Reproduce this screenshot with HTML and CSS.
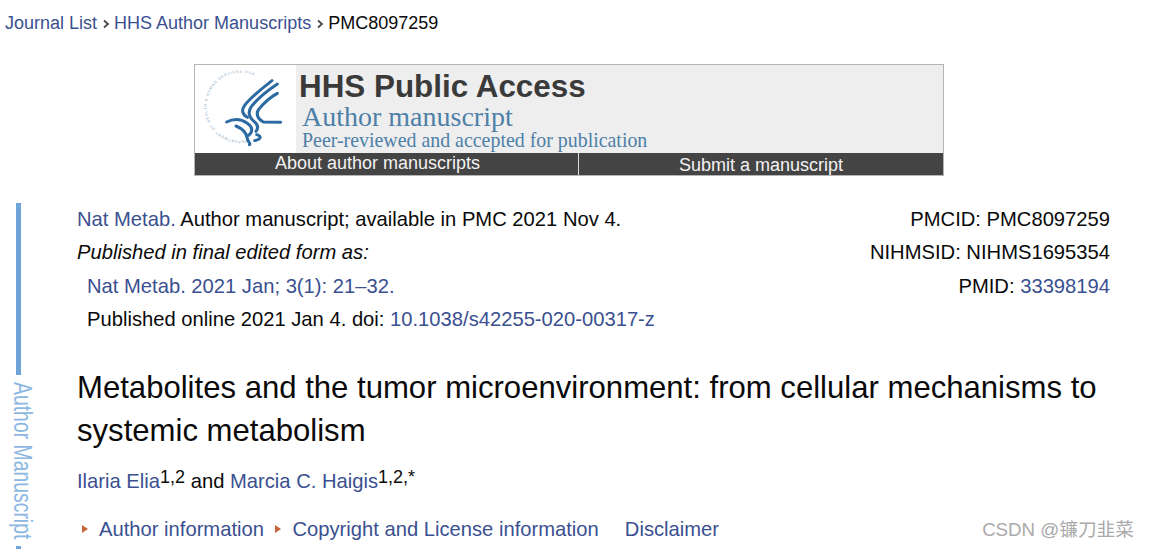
FILE: index.html
```html
<!DOCTYPE html>
<html lang="en">
<head>
<meta charset="utf-8">
<title>Metabolites and the tumor microenvironment</title>
<link rel="stylesheet" href="styles.css">
</head>
<body>
<nav class="crumbs">
  <a href="#">Journal List</a>
  <svg class="chev" viewBox="0 0 8 10"><path d="M2 1.5 L6 5 L2 8.5" fill="none" stroke="#444" stroke-width="1.7"/></svg>
  <a href="#">HHS Author Manuscripts</a>
  <svg class="chev" viewBox="0 0 8 10"><path d="M2 1.5 L6 5 L2 8.5" fill="none" stroke="#444" stroke-width="1.7"/></svg>
  <span>PMC8097259</span>
</nav>

<section class="banner">
  <div class="banner-top">
    <div class="seal">
      <svg viewBox="15 15 303 264" width="101" height="88">
        <defs><path id="ring" d="M172 240 A102 102 0 1 1 226 70"/></defs>
        <text class="seal-text"><textPath href="#ring">DEPARTMENT OF HEALTH &amp; HUMAN SERVICES USA</textPath></text>
        <g fill="none" stroke="#2c6aa3" stroke-width="9" stroke-linecap="round" stroke-linejoin="round">
          <path d="M246 62 C218 84 186 108 164 136 C154 150 156 162 172 172"/>
          <path d="M262 72 C232 92 204 114 184 140 C174 154 176 170 192 184 C204 194 206 204 198 214"/>
          <path d="M262 100 C240 112 222 128 206 148 C196 162 204 178 220 186 L272 187"/>
          <path d="M110 186 C130 176 152 176 172 190 C190 202 188 216 176 226"/>
          <path d="M138 198 C158 206 170 218 172 236 C174 246 184 252 178 254"/>
          <path d="M200 224 C214 228 216 236 194 242"/>
        </g>
      </svg>
    </div>
    <div class="banner-copy">
      <div class="hhs">HHS Public Access</div>
      <div class="am">Author manuscript</div>
      <div class="peer">Peer-reviewed and accepted for publication</div>
    </div>
  </div>
  <div class="banner-bar">
    <a class="bar-left" href="#">About author manuscripts</a>
    <a class="bar-right" href="#">Submit a manuscript</a>
  </div>
</section>

<aside class="side">
  <span class="side-bar"></span>
  <span class="side-text">Author Manuscript</span>
  <span class="side-bar"></span>
</aside>

<main class="article">
  <div class="meta">
    <div class="meta-left">
      <div><a href="#">Nat Metab.</a> Author manuscript; available in PMC 2021 Nov 4.</div>
      <div><em>Published in final edited form as:</em></div>
      <div class="indent"><a href="#">Nat Metab. 2021 Jan; 3(1): 21–32.</a></div>
      <div class="indent">Published online 2021 Jan 4. doi: <a href="#">10.1038/s42255-020-00317-z</a></div>
    </div>
    <div class="meta-right">
      <div>PMCID: PMC8097259</div>
      <div>NIHMSID: NIHMS1695354</div>
      <div>PMID: <a href="#">33398194</a></div>
    </div>
  </div>
  <h1>Metabolites and the tumor microenvironment: from cellular mechanisms to systemic metabolism</h1>
  <p class="authors"><a href="#">Ilaria Elia</a><sup>1,2</sup> and <a href="#">Marcia C. Haigis</a><sup>1,2,*</sup></p>
  <div class="links">
    <span class="tri"></span><a href="#">Author information</a>
    <span class="tri"></span><a href="#">Copyright and License information</a>
    <a class="disc" href="#">Disclaimer</a>
  </div>
</main>

<div class="mark">CSDN @镰刀韭菜</div>
</body>
</html>
```
FILE: styles.css
```css
html, body {
  margin: 0;
  padding: 0;
  height: 549px;
  overflow: hidden;
  background: #fff;
}
body {
  position: relative;
  font-family: "Liberation Sans", Arial, sans-serif;
  font-size: 20.2px;
  color: #0a0a0a;
}
a {
  color: #3a5090;
  text-decoration: none;
}
.crumbs {
  display: flex;
  align-items: center;
  gap: 4.5px;
  height: 46px;
  padding-left: 5px;
  font-size: 18px;
}
.chev {
  width: 8px;
  height: 10px;
  margin-top: 2px;
}
.banner {
  box-sizing: border-box;
  width: 750px;
  height: 112px;
  margin: 18px 0 0 194px;
  border: 1px solid #b5b5b5;
  background: #eee;
  display: flex;
  flex-direction: column;
}
.banner-top {
  display: flex;
  height: 88px;
}
.seal {
  width: 101px;
  height: 88px;
  background: #fff;
}
.seal svg {
  display: block;
}
.seal-text {
  font-size: 11px;
  fill: #86a2bb;
  letter-spacing: 2.6px;
}
.banner-copy {
  padding-left: 3px;
}
.hhs {
  font-weight: 700;
  font-size: 31.4px;
  line-height: 32px;
  margin-top: 6px;
  color: #3a3a3a;
}
.am {
  font-family: "Liberation Serif", serif;
  font-size: 28px;
  line-height: 28px;
  margin-left: 3px;
  color: #4d80a8;
}
.peer {
  font-family: "Liberation Serif", serif;
  font-size: 19.9px;
  line-height: 20px;
  margin-left: 3px;
  margin-top: -1px;
  color: #4d80a8;
}
.banner-bar {
  display: flex;
  height: 22px;
  background: #444;
  font-size: 18px;
  line-height: 24px;
  text-align: center;
}
.banner-bar a {
  color: #f2f2f2;
}
.bar-left {
  box-sizing: border-box;
  width: 384px;
  padding-right: 1px;
  line-height: 20px;
  text-indent: -17px;
  border-right: 1px solid #ddd;
}
.bar-right {
  flex: 1;
}
.side {
  position: absolute;
  left: 11px;
  top: 203px;
  width: 22px;
  display: flex;
  flex-direction: column;
  align-items: flex-start;
  gap: 7px;
}
.side-bar {
  width: 5px;
  height: 172px;
  margin-left: 5px;
  background: #6ea4d8;
  flex: none;
}
.side-text {
  writing-mode: vertical-rl;
  margin-left: 1px;
  font-size: 19.4px;
  line-height: 22px;
  color: #8db8e2;
  white-space: nowrap;
  transform: scaleX(1.3);
}
.article {
  margin: 27px 39px 0 77px;
}
.meta {
  display: flex;
  justify-content: space-between;
  line-height: 33.4px;
}
.meta-right {
  text-align: right;
}
.indent {
  padding-left: 10px;
}
h1 {
  margin: 29px 0 0;
  font-size: 31.1px;
  font-weight: 400;
  line-height: 43px;
  color: #0a0a0a;
}
.authors {
  margin: 12px 0 0;
  line-height: 34px;
}
sup {
  font-size: 18px;
  line-height: 0;
  vertical-align: 5px;
}
.links {
  display: flex;
  align-items: center;
  margin: 14px 0 0;
  line-height: 34px;
}
.tri {
  width: 0;
  height: 0;
  margin: 1px 11px 0 5px;
  border-left: 6px solid #c8633a;
  border-top: 4px solid transparent;
  border-bottom: 4px solid transparent;
}
.links a + .tri {
  margin-left: 11.5px;
}
.disc {
  margin-left: 26px;
}
.mark {
  position: absolute;
  right: 15px;
  top: 519px;
  font-family: "Liberation Sans", "Noto Sans CJK SC", sans-serif;
  font-size: 18.7px;
  line-height: 22px;
  color: #aaa;
}
```
